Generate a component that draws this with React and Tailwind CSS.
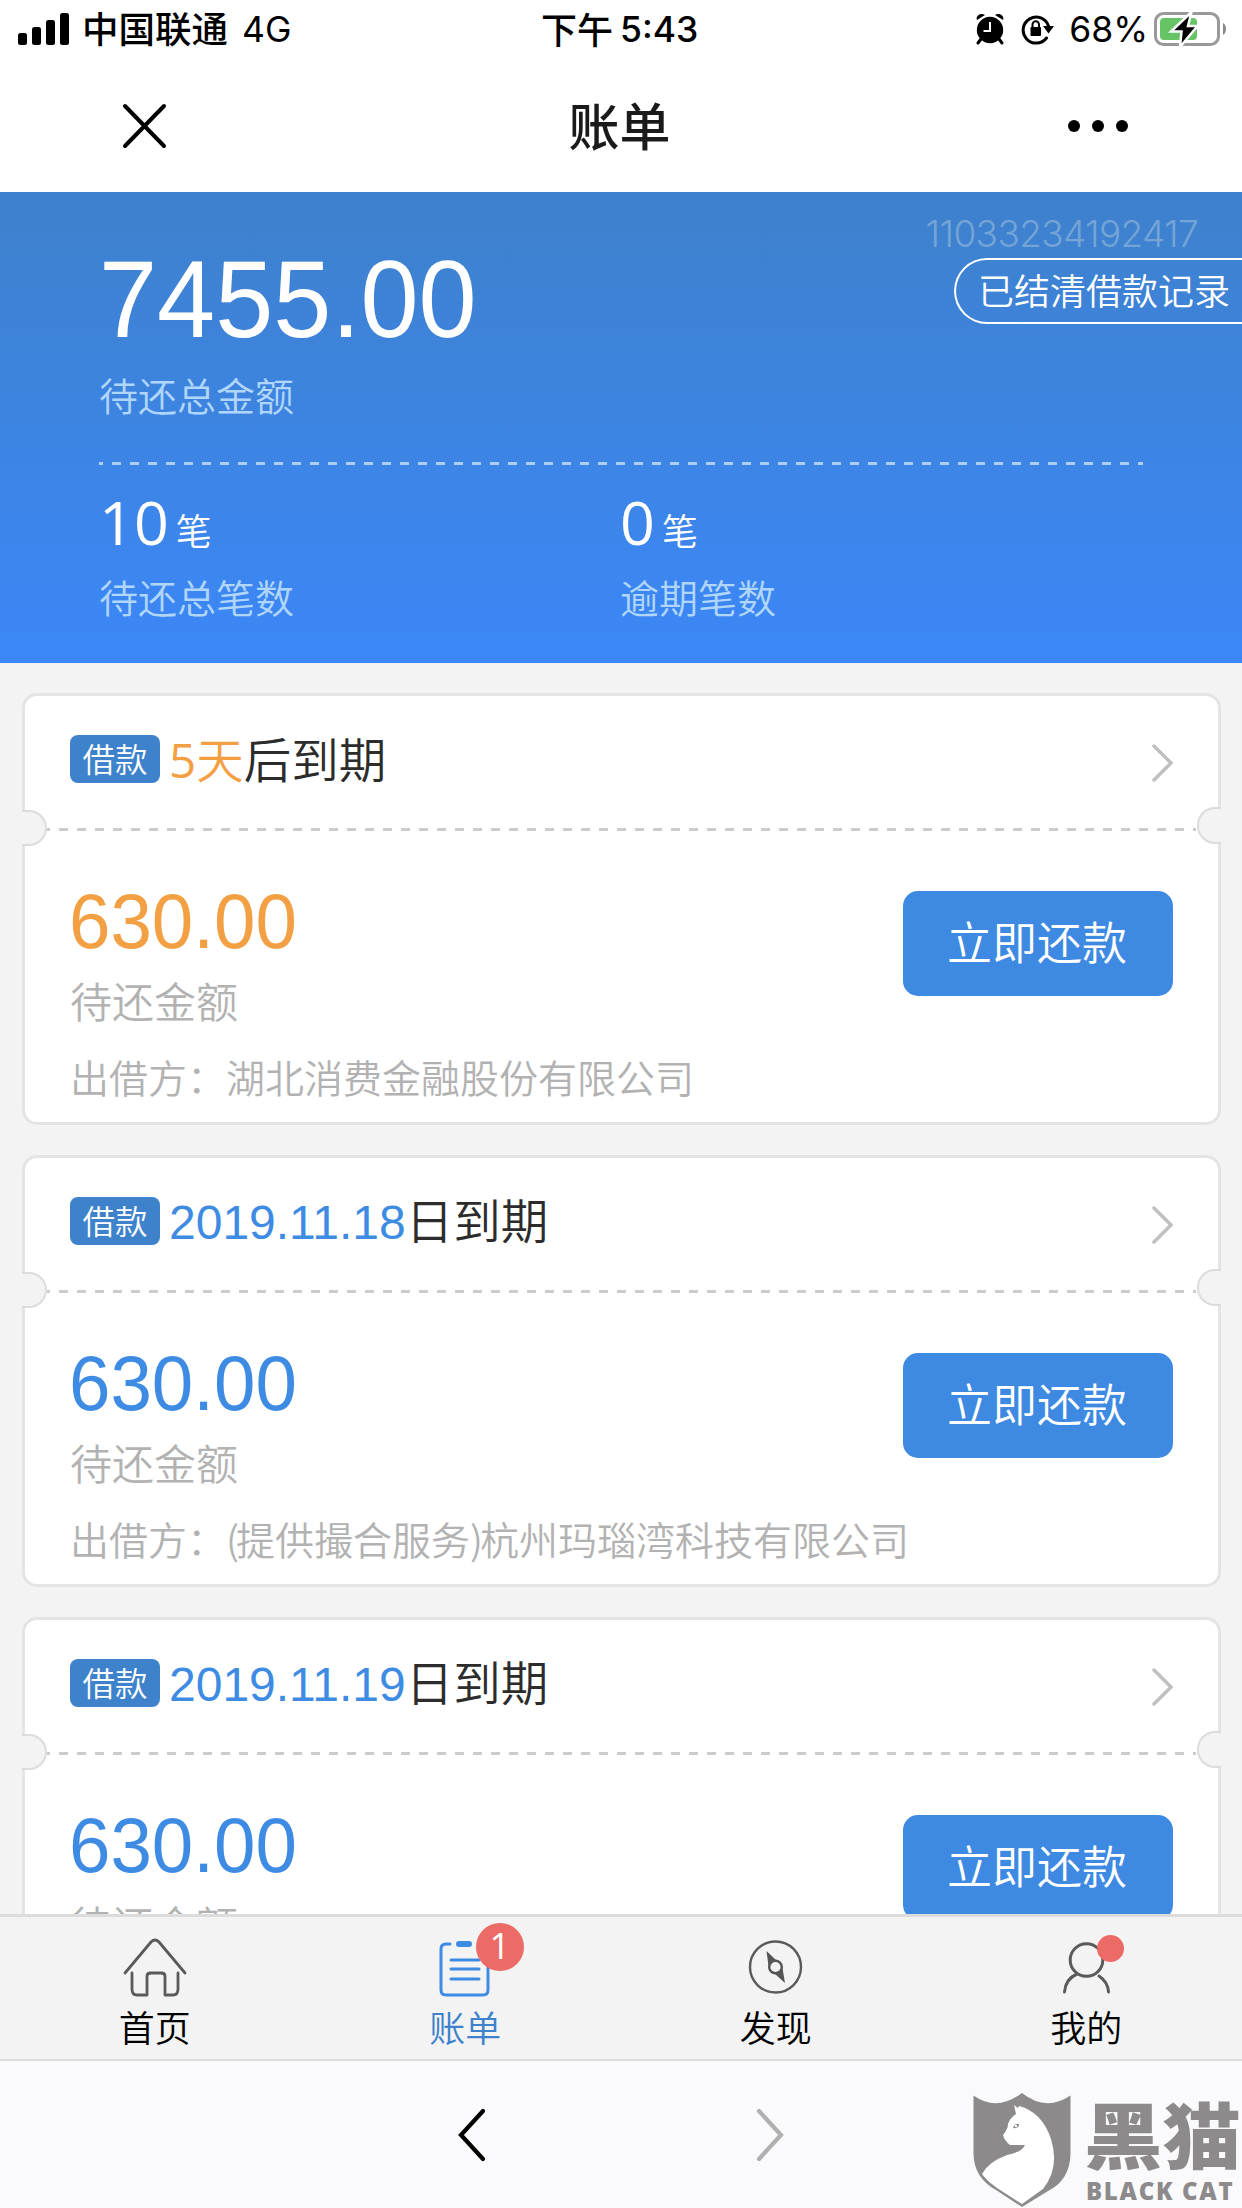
const cjk = "font-['Noto_Sans_CJK_SC',sans-serif]";

const bills = [
  { days: '5', unit: '天', rest: '后到期', amount: '630.00', lender: '湖北消费金融股份有限公司' },
  { date: '2019.11.18', rest: '日到期', amount: '630.00', broker: '提供撮合服务', lender: '杭州玛瑙湾科技有限公司' },
  { date: '2019.11.19', rest: '日到期', amount: '630.00' },
];

function StatusBar() {
  return (
    <div className="relative flex h-[60px] items-center justify-between pl-[18px] pr-[14px] text-black">
      <div className="flex items-center">
        <svg width="52" height="32" viewBox="0 0 52 32" className="mt-[-2px] mr-[12px]">
          <rect x="0" y="20" width="9" height="12" rx="2.5" />
          <rect x="14" y="14" width="9" height="18" rx="2.5" />
          <rect x="28" y="7" width="9" height="25" rx="2.5" />
          <rect x="42" y="0" width="9" height="32" rx="2.5" />
        </svg>
        <span className="mt-[-4px] text-[36.5px] font-medium leading-[56px]">中国联通</span>
        <span className="ml-[14px] font-['Inter',sans-serif] text-[35.5px] leading-[60px]">4G</span>
      </div>
      <div className="absolute left-[541px] top-0 flex items-center">
        <span className="mt-[-5px] text-[36px] font-medium leading-[60px]">下午</span>
        <span className="ml-[7px] font-['Inter',sans-serif] text-[35.5px] font-medium leading-[60px]">5:43</span>
      </div>
      <div className="mt-[-2px] flex items-center">
        <svg width="28" height="32" viewBox="0 0 28 32" className="mr-[17px]">
          <circle cx="14" cy="17" r="13.2" />
          <path d="M1 7C-1 3 5-1 9 2ZM27 7C29 3 23-1 19 2Z" />
          <path d="M5 26L2 30M23 26L26 30" stroke="#000" strokeWidth="3" strokeLinecap="round" />
          <path d="M14 9V18H7.500" stroke="#fff" strokeWidth="2" fill="none" />
        </svg>
        <svg width="34" height="32" viewBox="0 0 34 32" className="mr-[14px]">
          <path d="M25.500 25A13 13 0 1 1 27.500 13" stroke="#000" strokeWidth="3" fill="none" strokeLinecap="round" />
          <path d="M22 13H33L27.500 20.500Z" />
          <rect x="9.500" y="14" width="10.500" height="9" rx="1" />
          <path d="M11.500 15V11.500A3.200 3.200 0 0 1 18 11.500V15" stroke="#000" strokeWidth="2" fill="none" />
        </svg>
        <span className="mr-[6px] mt-[2px] font-['Inter',sans-serif] text-[35.5px] leading-[60px]">68%</span>
        <svg width="74" height="36" viewBox="0 0 74 36">
          <rect x="1.500" y="2.500" width="63" height="31" rx="8" fill="none" stroke="#999" strokeWidth="3" />
          <path d="M69 12C73 14 73 22 69 24Z" fill="#888" />
          <rect x="6" y="7" width="37" height="22" rx="4" fill="#66c466" />
          <path d="M37.500 1L17 20.500H27.500L26 36L43.500 15H34Z" stroke="#fff" strokeWidth="2.500" />
        </svg>
      </div>
    </div>
  );
}

function NavBar() {
  return (
    <div className="flex h-[132px] items-center justify-between pl-[112px] pr-[112px]">
      <svg width="64" height="64" viewBox="0 0 64 64">
        <path d="M13 12L52 52M52 12L13 52" stroke="#000" strokeWidth="4" strokeLinecap="round" />
      </svg>
      <div className="mt-[-5px] mr-[3px] text-[51px] font-medium leading-[132px] text-[#1a1a1a]">账单</div>
      <svg width="64" height="14" viewBox="0 0 64 14">
        <circle cx="8" cy="7" r="6" />
        <circle cx="32" cy="7" r="6" />
        <circle cx="56" cy="7" r="6" />
      </svg>
    </div>
  );
}

function Count({ value, label }) {
  return (
    <div className="w-[521px]">
      <div className="flex h-[66px] items-baseline text-white">
        <span className="font-['Open_Sans',sans-serif] text-[61px] leading-[66px]">{value}</span>
        <span className="ml-[7px] text-[36px] font-[350] leading-[66px]">笔</span>
      </div>
      <div className="mt-[21px] text-[39px] font-[350] leading-[40px] text-[#b0d6fb]">{label}</div>
    </div>
  );
}

function Summary() {
  return (
    <section className="relative h-[471px] bg-linear-to-b from-[#3e81cc] to-[#3c87f8] px-[99px] pt-[51px]">
      <div className="h-[116px] origin-[0_80%] scale-y-[1.04] font-['Liberation_Sans',sans-serif] text-[104.5px] leading-[116px] text-white">
        7455.00
      </div>
      <div className="mt-[15px] text-[39px] font-[350] leading-[40px] text-[#b0d6fb]">待还总金额</div>
      <div className="mt-[48px] h-[3px] bg-[repeating-linear-gradient(90deg,#accdf4_0_4.5px,transparent_4.5px_13.5px,#accdf4_13.5px_18px)]" />
      <div className="mt-[24px] flex">
        <Count value="10" label="待还总笔数" />
        <Count value="0" label="逾期笔数" />
      </div>
      <div className="absolute right-[44px] top-[20px] font-['Inter',sans-serif] text-[37px] font-light leading-[44px] tracking-[-0.65px] text-[#74a5d6]">
        11033234192417
      </div>
      <div className="absolute right-0 top-[66px] h-[66px] w-[288px] rounded-l-full border-2 border-r-0 border-white pl-[22px] text-[36px] font-[350] leading-[58px] whitespace-nowrap text-white">
        已结清借款记录
      </div>
    </section>
  );
}

function DueLabel({ bill }) {
  return (
    <span className="mt-[-6px] ml-[9px] flex items-baseline text-[47.5px] font-[350] leading-[60px]">
      {bill.date ? (
        <span className="mt-[-1px] font-['Liberation_Sans',sans-serif] text-[48px] text-[#3e8be3]">{bill.date}</span>
      ) : (
        <span className="text-[#f3a045]">
          <span className="font-['Open_Sans',sans-serif] font-normal">{bill.days}</span>
          {bill.unit}
        </span>
      )}
      <span className="text-[#2c2c2c]">{bill.rest}</span>
    </span>
  );
}

function BillCard({ bill }) {
  const color = bill.days ? 'text-[#f3a045]' : 'text-[#3e8be3]';
  return (
    <div className="relative h-[432px] shrink-0 rounded-[15px] border-[3px] border-[#e4e4e4] bg-white">
      <div className="flex h-[132px] items-center justify-between pl-[45px] pr-[45px]">
        <div className="flex items-center">
          <span className="mt-[-6px] h-[48px] w-[90px] rounded-[8px] bg-[#3e82cc] text-center text-[32.5px] font-[350] leading-[46px] text-white">
            借款
          </span>
          <DueLabel bill={bill} />
        </div>
        <svg width="24" height="40" viewBox="0 0 24 40" className="mt-[2px]">
          <path d="M5 3L22 20L5 37" fill="none" stroke="#c0c0c0" strokeWidth="3.500" strokeLinecap="round" />
        </svg>
      </div>
      <div className="mx-[22px] h-[3px] bg-[repeating-linear-gradient(90deg,#ccc_0_3px,transparent_3px_12px,#ccc_12px_18px)]" />
      {/* ticket notches */}
      <div className="absolute left-[-3px] top-[114px] h-[36px] w-[25px] rounded-r-[18px] border-2 border-l-0 border-[#dcdcdc] bg-[#f3f3f3]" />
      <div className="absolute right-[-3px] top-[111px] h-[37px] w-[24px] rounded-l-[18px] border-2 border-r-0 border-[#dcdcdc] bg-[#f3f3f3]" />
      <div className="flex justify-between pl-[44px] pr-[45px]">
        <div
          className={`mt-[52px] h-[80px] origin-[0_80%] scale-y-[1.04] font-['Liberation_Sans',sans-serif] text-[74.5px] leading-[80px] ${color}`}
        >
          {bill.amount}
        </div>
        <button className="mt-[60px] h-[105px] w-[270px] rounded-[15px] bg-[#3e8ae2] pr-[2px] pb-[5px] text-[45px] font-[350] leading-[98px] text-white">
          立即还款
        </button>
      </div>
      <div className="mt-[-18px] pl-[45px] text-[42px] font-[350] leading-[44px] text-[#b2b2b2]">待还金额</div>
      {bill.lender && (
        <div className="mt-[34px] pl-[45px] text-[39px] font-[350] leading-[40px] whitespace-nowrap text-[#b2b2b2]">
          出借方：
          {bill.broker && (
            <>
              <span className="tracking-[-3px]">(</span>
              {bill.broker}
              <span className="tracking-[-3px]">)</span>
            </>
          )}
          {bill.lender}
        </div>
      )}
    </div>
  );
}

function HomeIcon() {
  return (
    <svg width="64" height="60" viewBox="0 0 64 60" fill="none" stroke="#5a5a5a" strokeWidth="2.800" strokeLinecap="round" strokeLinejoin="round">
      <path d="M2 36L28 5Q32 1 36 5L62 36" />
      <path d="M9 36V52Q9 58 14 58H24V39Q24 36 28 36H38Q42 36 42 39V58H50Q55 58 55 52V36" />
    </svg>
  );
}

function BillIcon() {
  return (
    <svg width="64" height="60" viewBox="0 0 64 60" fill="none" stroke="#3e8be3" strokeWidth="3" strokeLinecap="round">
      <path d="M16 7H12Q7 7 7 12V53Q7 58 12 58H49Q54 58 54 53V12Q54 7 49 7H45" />
      <path d="M25 7H35" strokeWidth="6" />
      <path d="M17 23H45M17 32H45M17 42H45" />
    </svg>
  );
}

function CompassIcon() {
  return (
    <svg width="64" height="60" viewBox="0 0 64 60" fill="none" stroke="#5a5a5a" strokeWidth="2.400">
      <circle cx="31.500" cy="30" r="25.500" />
      <path d="M22.500 14L24.500 29Q25 36 31 37L41 46L38.500 31Q38 24 32 23Z" fill="#555" stroke="none" />
      <circle cx="31.500" cy="30" r="6.300" fill="#f3f3f3" stroke="#555" />
    </svg>
  );
}

function PersonIcon() {
  return (
    <svg width="64" height="60" viewBox="0 0 64 60" fill="none" stroke="#5a5a5a" strokeWidth="3" strokeLinecap="round">
      <circle cx="31.500" cy="23" r="16.300" />
      <path d="M9.500 55Q10.500 42 22 37M44 39Q53 45 53.500 55" />
    </svg>
  );
}

const tabs = [
  { label: '首页', Icon: HomeIcon },
  { label: '账单', Icon: BillIcon, active: true, badge: '1' },
  { label: '发现', Icon: CompassIcon },
  { label: '我的', Icon: PersonIcon, dot: true },
];

function TabBar() {
  return (
    <nav className="grid h-[147px] shrink-0 grid-cols-4 border-t-[3px] border-b-2 border-[#dcdcdc] bg-[#f3f3f3]">
      {tabs.map(({ label, Icon, active, badge, dot }) => (
        <div key={label} className="flex flex-col items-center pt-[20px]">
          <div className="relative h-[60px] w-[64px]">
            <Icon />
            {badge && (
              <span className="absolute left-[42px] top-[-14px] size-[48px] rounded-full bg-[#ec6b66] text-center font-['Open_Sans',sans-serif] text-[36px] leading-[46px] text-white">
                {badge}
              </span>
            )}
            {dot && <span className="absolute left-[42px] top-[-2px] size-[27px] rounded-full bg-[#ec6b66]" />}
          </div>
          <span
            className={`mt-[9px] pr-px text-[36px] font-[350] leading-[40px] ${active ? 'text-[#3e82cc]' : 'text-black'}`}
          >
            {label}
          </span>
        </div>
      ))}
    </nav>
  );
}

function Watermark() {
  return (
    <div className="absolute right-0 bottom-0 flex h-[116px] w-[269px] text-[#8c8a8b]">
      <svg width="98" height="116" viewBox="0 0 98 116" className="shrink-0">
        <path d="M0.500 3.500Q24 20 49 1Q73 20 97.500 3.500V62Q97 88 75 99L49 115L23 98Q1 86 0.500 62Z" fill="#8c8a8b" />
        <path d="M43 22L41 13L45 16L46 14Q69 20 78 47Q87 76 70 97L49 112L24 96Q13 88 9 82Q15 70 34 63Q49 60 52 53H37Q31 48 30 43Q35 37 35 32Q37 26 43 22Z" fill="#fff" />
        <path d="M40 36Q42 31 46 32Q46 37 40 36Z" fill="#8c8a8b" />
        <circle cx="43" cy="34" r="1.200" fill="#fff" />
      </svg>
      <div className="ml-[13px] flex flex-col items-start">
        <span className="h-[82px] origin-left scale-x-[1.09] text-[72px] font-black leading-[80px] whitespace-nowrap">黑猫</span>
        <span className="ml-[2px] font-['Open_Sans',sans-serif] text-[24px] font-extrabold leading-[34px] tracking-[1.700px] whitespace-nowrap">
          BLACK CAT
        </span>
      </div>
    </div>
  );
}

function BrowserBar() {
  return (
    <div className="relative flex h-[147px] shrink-0 items-center bg-[#fafafc]">
      <svg width="32" height="56" viewBox="0 0 32 56" className="ml-[456px]">
        <path d="M27 4L5 28L27 52" fill="none" stroke="#000" strokeWidth="4.200" strokeLinecap="round" />
      </svg>
      <svg width="32" height="56" viewBox="0 0 32 56" className="ml-[266px]">
        <path d="M5 4L27 28L5 52" fill="none" stroke="#b0b0b0" strokeWidth="4.200" strokeLinecap="round" />
      </svg>
      <Watermark />
    </div>
  );
}

export default function App() {
  return (
    <div lang="zh-CN" className={`flex h-[2208px] w-[1242px] flex-col overflow-hidden bg-white ${cjk}`}>
      <StatusBar />
      <NavBar />
      <Summary />
      <main className="flex min-h-0 flex-1 flex-col gap-[30px] overflow-hidden bg-[#f3f3f3] pt-[30px] pl-[22px] pr-[21px]">
        {bills.map((bill) => (
          <BillCard key={bill.rest + bill.date} bill={bill} />
        ))}
      </main>
      <TabBar />
      <BrowserBar />
    </div>
  );
}
